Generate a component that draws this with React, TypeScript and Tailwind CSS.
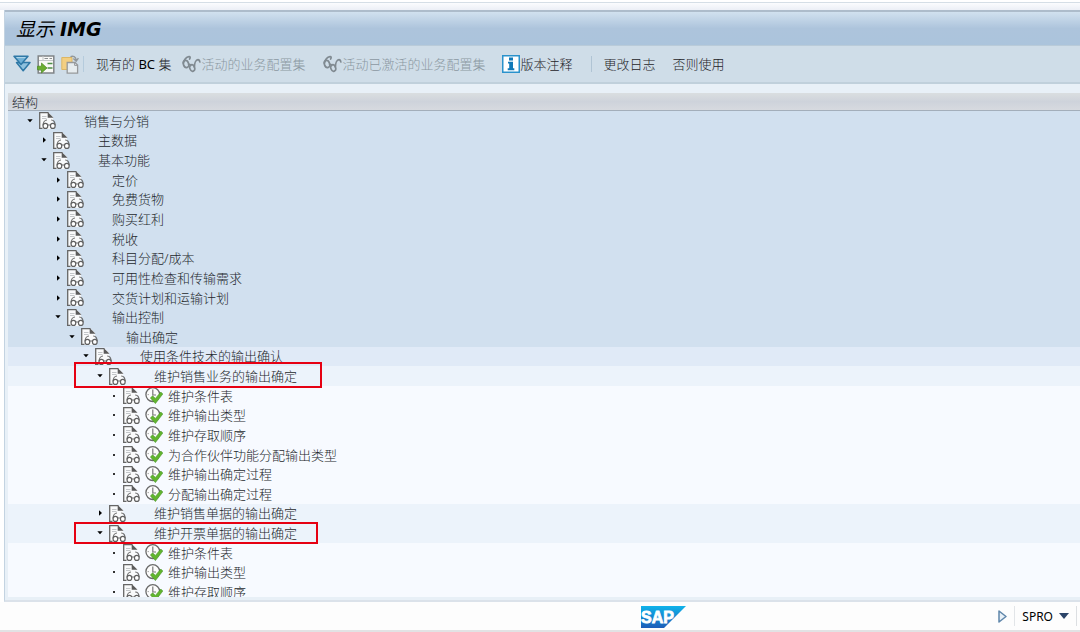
import type { ReactNode } from "react";

type NodeState = "open" | "closed" | "leaf";

type TreeNode = {
    level: number;
    label: string;
    state: NodeState;
    mark?: "wide" | "narrow";
};

const nodes: TreeNode[] = [
    { level: 0, label: "销售与分销", state: "open" },
    { level: 1, label: "主数据", state: "closed" },
    { level: 1, label: "基本功能", state: "open" },
    { level: 2, label: "定价", state: "closed" },
    { level: 2, label: "免费货物", state: "closed" },
    { level: 2, label: "购买红利", state: "closed" },
    { level: 2, label: "税收", state: "closed" },
    { level: 2, label: "科目分配/成本", state: "closed" },
    { level: 2, label: "可用性检查和传输需求", state: "closed" },
    { level: 2, label: "交货计划和运输计划", state: "closed" },
    { level: 2, label: "输出控制", state: "open" },
    { level: 3, label: "输出确定", state: "open" },
    { level: 4, label: "使用条件技术的输出确认", state: "open" },
    { level: 5, label: "维护销售业务的输出确定", state: "open", mark: "wide" },
    { level: 6, label: "维护条件表", state: "leaf" },
    { level: 6, label: "维护输出类型", state: "leaf" },
    { level: 6, label: "维护存取顺序", state: "leaf" },
    { level: 6, label: "为合作伙伴功能分配输出类型", state: "leaf" },
    { level: 6, label: "维护输出确定过程", state: "leaf" },
    { level: 6, label: "分配输出确定过程", state: "leaf" },
    { level: 5, label: "维护销售单据的输出确定", state: "closed" },
    { level: 5, label: "维护开票单据的输出确定", state: "open", mark: "narrow" },
    { level: 6, label: "维护条件表", state: "leaf" },
    { level: 6, label: "维护输出类型", state: "leaf" },
    { level: 6, label: "维护存取顺序", state: "leaf" },
];

// Rows get lighter the deeper they are nested
const levelColors = [
    "bg-[#d1e0ef]",
    "bg-[#d1e0ef]",
    "bg-[#d1e0ef]",
    "bg-[#d1e0ef]",
    "bg-[#e0eaf7]",
    "bg-[#ecf3fb]",
    "bg-[#f7faff]",
];

function DocIcon() {
    return (
        <svg viewBox="0 0 17 17" className="h-[17px] w-[17px] shrink-0" fill="none" aria-hidden="true">
            <path d="M0.5 17V0.5H9.5L14 5V17Z" fill="#f9fafb" />
            <path d="M0.7 17V0.7H9.5M0 16.4H3.5" stroke="#666" strokeWidth="1.3" />
            <path d="M8.7 0L14.5 5.8H8.7Z" fill="#5a5a5a" />
            <path d="M3 4.5H7.5M3 6.5H7.5" stroke="#c3c6c9" />
            <path d="M8 8C5.8 8 4.1 10.4 4.1 13.4M12.2 8C14.6 8 16.1 10.4 16.1 13.4" stroke="#6a6a6a" strokeWidth="1.2" />
            <rect x="4.1" y="11.4" width="4.6" height="5" rx="2.2" fill="#fff" stroke="#606060" strokeWidth="1.2" />
            <rect x="11.5" y="11.4" width="4.6" height="5" rx="2.2" fill="#fff" stroke="#606060" strokeWidth="1.2" />
            <path d="M8.7 13H11.5" stroke="#6a6a6a" />
        </svg>
    );
}

function ExecuteIcon() {
    return (
        <svg viewBox="0 0 18 17" className="h-[17px] w-[18px] shrink-0" fill="none" aria-hidden="true">
            <circle cx="7.8" cy="7.6" r="6.9" fill="#fcfcfc" stroke="#6a6a6a" strokeWidth="1.3" />
            <path d="M7.8 2.5V8H11" stroke="#777" strokeWidth="1.2" />
            <path d="M2.5 7.6H4M7.8 12V13.5" stroke="#aaa" />
            <path d="M5.4 11L7.6 8.8L10.4 11.4L15.8 5L17.8 7L10.4 16.6Z" fill="#62b52e" stroke="#46922a" strokeWidth="0.6" />
        </svg>
    );
}

function GlassesIcon() {
    return (
        <svg viewBox="0 0 20 18" className="h-[18px] w-5 shrink-0" fill="none" stroke="#808a91" strokeWidth="1.7" strokeLinecap="round" aria-hidden="true">
            <path d="M2.4 8C3.2 4.6 5.6 2 8 1.6C9.4 1.5 9.4 2.8 8.6 4M13.4 12C13.4 8 15 4.8 17 4.6C18.4 4.6 18.6 5.6 18.8 7M7.8 9.4C8.6 9 9.2 9.4 9.6 10.6" />
            <ellipse cx="5" cy="9" rx="2.6" ry="3.6" transform="rotate(-20 5 9)" />
            <ellipse cx="11.2" cy="13" rx="2.4" ry="3.3" transform="rotate(-20 11.2 13)" />
        </svg>
    );
}

function InfoIcon() {
    return (
        <svg viewBox="0 0 18 18" className="h-[18px] w-[18px] shrink-0" aria-hidden="true">
            <rect x="0.75" y="0.75" width="16.5" height="16.5" fill="#fff" stroke="#2a92cc" strokeWidth="1.5" />
            <path d="M7 2.5H11V5.4H7ZM6 6.7H11V13.3H12.3V15.2H5.7V13.3H7.2V8.5H6Z" fill="#1179b8" />
        </svg>
    );
}

function ExpandIcon() {
    return (
        <svg viewBox="0 0 18 18" className="h-[18px] w-[18px]" strokeLinejoin="round" aria-hidden="true">
            <path d="M3.5 7.5H17L10.2 15.8Z" fill="#8fc1de" stroke="#2f78a6" strokeWidth="1.5" />
            <path d="M1 1.2H15L8 9.5Z" fill="#6fb0d6" stroke="#2f78a6" strokeWidth="1.5" />
            <path d="M3.5 2.6H12.5" stroke="#b5d8eb" />
        </svg>
    );
}

function TransferIcon() {
    return (
        <svg viewBox="0 0 18 19" className="h-[19px] w-[18px]" fill="none" aria-hidden="true">
            <rect x="1.2" y="1" width="15.6" height="17" fill="#f8f8f6" stroke="#808487" strokeWidth="1.5" />
            <path d="M2 5.5H16M6 1V5M2 15.5H7" stroke="#c3c6c8" />
            <path d="M7.5 3.5H11M12.5 3.5H15" stroke="#8b8f91" />
            <path d="M10.5 8.5H15.5M10.5 13H15.5" stroke="#4d8f48" strokeWidth="1.5" />
            <path d="M0.5 11.2H4.5V8L10 13L4.5 18V14.8H0.5Z" fill="#69ad2f" stroke="#4a8a20" strokeWidth="0.7" />
        </svg>
    );
}

function PasteIcon() {
    return (
        <svg viewBox="0 0 18 19" className="h-[19px] w-[18px]" fill="none" aria-hidden="true">
            <path d="M0.8 2.5H11V14.5H0.8Z" fill="#f3cf82" stroke="#dcb766" />
            <path d="M6.2 7.5H14L16.6 10V18.2H6.2Z" fill="#e6ecef" stroke="#96999b" strokeWidth="1.3" />
            <path d="M13.6 7.5V10.4H16.6" stroke="#96999b" />
            <path d="M9.5 1.6C12 0.6 14.8 1.8 15.2 5M12.4 3.4L15.2 6.2L17.4 3.2" stroke="#92979a" strokeWidth="1.4" />
        </svg>
    );
}

function SapLogo() {
    return (
        <svg viewBox="0 0 45 22" className="h-[22px] w-[45px]" role="img" aria-label="SAP">
            <defs>
                <linearGradient id="sap" x1="0" y1="0" x2="0" y2="1">
                    <stop offset="0" stopColor="#0fb3ea" />
                    <stop offset="1" stopColor="#1c5cb8" />
                </linearGradient>
            </defs>
            <path d="M0 0H45L23 22H0Z" fill="url(#sap)" />
            <text x="0" y="17" fill="#fff" stroke="#fff" strokeWidth="0.8" fontFamily="Liberation Sans, sans-serif" fontWeight="700" fontSize="16">
                SAP
            </text>
        </svg>
    );
}

function Marker({ state }: { state: NodeState }) {
    return (
        <svg viewBox="0 0 8 8" className="h-2 w-2" aria-hidden="true">
            {state === "open" && <path d="M1.3 2.2H6.7L4 5.3Z" />}
            {state === "closed" && <path d="M3 1.2L6 4L3 6.8Z" />}
            {state === "leaf" && <path d="M3 3H5V5H3Z" fill="#333" />}
        </svg>
    );
}

function ToolButton({ icon, children, disabled }: { icon?: ReactNode; children: ReactNode; disabled?: boolean }) {
    return (
        <button
            disabled={disabled}
            className="flex items-center whitespace-nowrap text-[#1f2428] disabled:text-[#8b98a2]"
        >
            {icon}
            <span className="pt-0.5">{children}</span>
        </button>
    );
}

function TreeRow({ node }: { node: TreeNode }) {
    const isLeaf = node.state === "leaf";

    return (
        <li
            role="treeitem"
            aria-level={node.level + 1}
            aria-expanded={isLeaf ? undefined : node.state === "open"}
            className={`relative flex min-h-0 items-center pl-[18px] ${levelColors[node.level]}`}
        >
            <div className="flex items-center" style={{ marginLeft: node.level * 14 }}>
                {isLeaf ? (
                    <Marker state="leaf" />
                ) : (
                    <button aria-label={node.label}>
                        <Marker state={node.state} />
                    </button>
                )}
                <span className="ml-[5px] flex w-[45px] gap-[5px]">
                    <DocIcon />
                    {isLeaf && <ExecuteIcon />}
                </span>
                <span className="whitespace-nowrap leading-[18px]">{node.label}</span>
            </div>
            {node.mark === "wide" && (
                <span className="absolute -top-1 left-[66px] z-10 h-[26px] w-[248px] border-2 border-[#e60012]" />
            )}
            {node.mark === "narrow" && (
                <span className="absolute -top-px left-[66px] z-10 h-[22px] w-[244px] border-2 border-[#e60012]" />
            )}
        </li>
    );
}

export default function App() {
    return (
        <div className="flex h-screen flex-col overflow-hidden bg-white pt-0.5 font-['Noto_Sans','Noto_Sans_CJK_SC',sans-serif] text-[13px] font-light text-[#24282c]">
            <div className="h-2 shrink-0 border-t border-[#d5dee6] bg-linear-to-b from-[#fbfcfe] to-[#eceff6]" />

            <main className="ml-1 flex min-h-0 flex-1 flex-col border-b-2 border-l border-b-[#dbe2ea] border-l-[#c3d3e1] bg-[#e8f0f7]">
                <header className="flex h-9 shrink-0 items-center border-t-2 border-b border-t-[#adbccb] border-b-[#b9cbd9] bg-linear-to-b from-[#d1e1ef] via-[#adc4dc] to-[#abc4dc] pl-[11px]">
                    <h1 className="font-['DejaVu_Sans','Noto_Sans_CJK_SC',sans-serif] text-[19px] leading-6 font-normal text-black italic">
                        显示 <span className="font-bold">IMG</span>
                    </h1>
                </header>

                <div role="toolbar" className="flex h-[38px] shrink-0 items-center border-b-2 border-[#c0d0db] bg-[#cfdde8] pl-2">
                    <div className="flex items-center gap-1.5">
                        <button aria-label="展开">
                            <ExpandIcon />
                        </button>
                        <button aria-label="转移">
                            <TransferIcon />
                        </button>
                        <button aria-label="粘贴">
                            <PasteIcon />
                        </button>
                    </div>
                    <span className="mr-3 ml-1 h-4 w-px bg-[#b5cbdc]" />
                    <ToolButton>
                        现有的 <span className="font-normal text-black">BC</span> 集
                    </ToolButton>
                    <div className="ml-2.5 flex gap-[17px]">
                        <ToolButton icon={<GlassesIcon />} disabled>
                            活动的业务配置集
                        </ToolButton>
                        <ToolButton icon={<GlassesIcon />} disabled>
                            活动已激活的业务配置集
                        </ToolButton>
                        <ToolButton icon={<InfoIcon />}>版本注释</ToolButton>
                    </div>
                    <span className="mr-3 ml-[18px] h-4 w-px bg-[#b0c4d4]" />
                    <div className="flex gap-[17px]">
                        <ToolButton>更改日志</ToolButton>
                        <ToolButton>否则使用</ToolButton>
                    </div>
                </div>

                <section className="mt-[9px] mb-[3px] ml-[3px] flex min-h-0 flex-1 flex-col">
                    <h2 className="flex h-[18px] shrink-0 items-center border-b border-[#a3aeba] bg-linear-to-b from-[#dadee0] via-[#ced3db] to-[#d7dadf] pl-1 leading-4 font-light">
                        结构
                    </h2>
                    <div className="min-h-0 flex-1 overflow-hidden bg-[#f7faff]">
                        <ul role="tree" className="grid h-[101%] auto-rows-fr">
                            {nodes.map((node, i) => (
                                <TreeRow key={i} node={node} />
                            ))}
                        </ul>
                    </div>
                </section>
            </main>

            <footer className="grid h-[30px] shrink-0 grid-cols-[1fr_auto_1fr] items-center border-b-2 border-[#e2e2e4] bg-[#fdfdfd]">
                <div className="col-start-2 ml-[247px] pt-0.5">
                    <SapLogo />
                </div>
                <div className="flex items-center justify-end">
                    <button aria-label="显示状态">
                        <svg viewBox="0 0 9 13" className="h-[13px] w-[9px]" aria-hidden="true">
                            <path d="M1 1L8 6.5L1 12Z" fill="#e8f0f7" stroke="#5f86aa" strokeWidth="1.5" strokeLinejoin="round" />
                        </svg>
                    </button>
                    <span className="mx-[7px] h-5 w-px bg-[#e2e5e8]" />
                    <button className="flex items-center gap-1.5 font-normal text-black">
                        <span className="pt-0.5 text-[12px]">SPRO</span>
                        <svg viewBox="0 0 10 6" className="h-1.5 w-2.5" aria-hidden="true">
                            <path d="M0 0H10L5 6Z" fill="#2b4468" />
                        </svg>
                    </button>
                    <span className="mr-[3px] ml-[7px] h-5 w-px bg-[#dcdfe2]" />
                </div>
            </footer>
        </div>
    );
}
